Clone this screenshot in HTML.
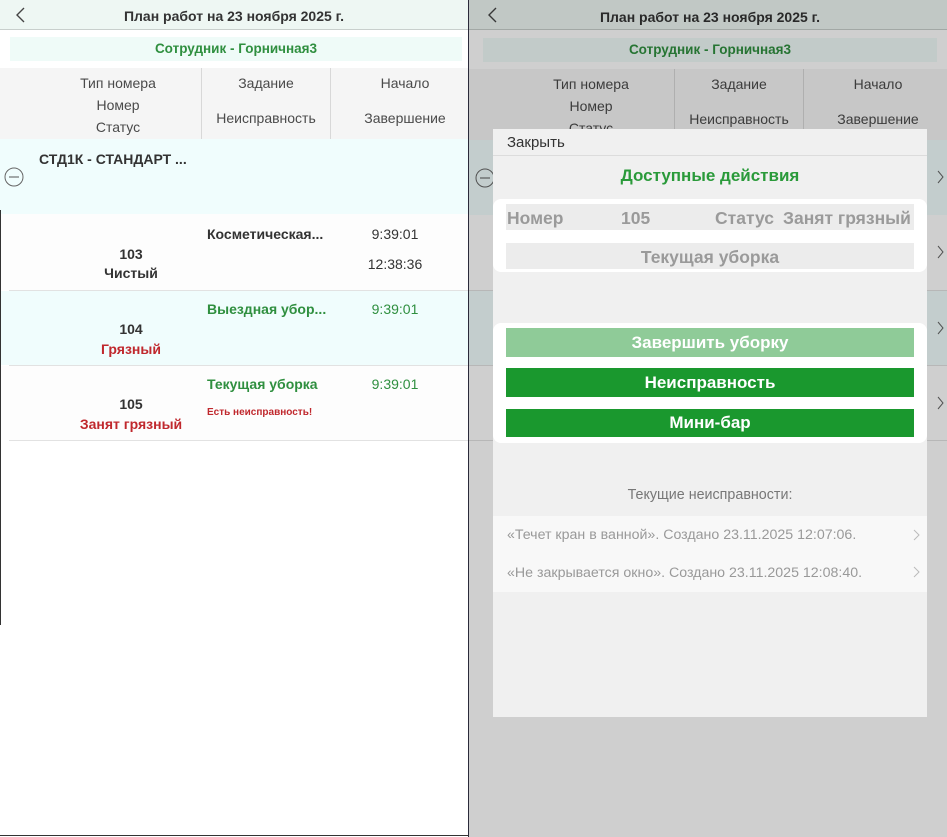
<!DOCTYPE html>
<html><head><meta charset="utf-8"><style>
*{margin:0;padding:0;box-sizing:border-box}
body{width:947px;height:837px;overflow:hidden;background:#fff;font-family:"Liberation Sans",sans-serif;position:relative}
.a{position:absolute}
.p{position:absolute;top:0;height:837px;overflow:hidden;background:#fff}
.hd{left:0;top:0;height:30px;background:#eef7f3;border-bottom:1px solid #c8cfcc}
.t{position:absolute;white-space:nowrap}
.c{text-align:center}
.b{font-weight:bold}
.g{color:#2f8f3f}
.r{color:#c0282d}
.k{color:#333}
.h{color:#4a4a4a;font-size:14px}
</style></head><body>

<!-- LEFT PANEL -->
<div class="p" style="left:0;width:468px">
  <div class="a hd" style="width:468px"></div>
  <svg class="a" style="left:14px;top:7px" width="14" height="16"><path d="M10 1 L3 8 L10 15" fill="none" stroke="#444" stroke-width="1.4"/></svg>
  <div class="t c b k" style="left:0;width:468px;top:8px;font-size:14px">План работ на 23 ноября 2025 г.</div>
  <div class="a" style="left:10px;top:37px;width:452px;height:24px;background:#effbf8"></div>
  <div class="t c b g" style="left:10px;width:452px;top:41px;font-size:13.5px">Сотрудник - Горничная3</div>
  <div class="a" style="left:0;top:68px;width:468px;height:71px;background:#f5f5f5"></div>
  <div class="a" style="left:201px;top:68px;width:1px;height:71px;background:#d8d8d8"></div>
  <div class="a" style="left:330px;top:68px;width:1px;height:71px;background:#d8d8d8"></div>
  <div class="t c h" style="left:18px;width:200px;top:75px">Тип номера</div>
  <div class="t c h" style="left:18px;width:200px;top:97px">Номер</div>
  <div class="t c h" style="left:18px;width:200px;top:119px">Статус</div>
  <div class="t c h" style="left:202px;width:128px;top:75px">Задание</div>
  <div class="t c h" style="left:202px;width:128px;top:110px">Неисправность</div>
  <div class="t c h" style="left:340px;width:130px;top:75px">Начало</div>
  <div class="t c h" style="left:340px;width:130px;top:110px">Завершение</div>
  <div class="a" style="left:0;top:139px;width:468px;height:75px;background:#f0fdfd"></div>
  <div class="t b k" style="left:39px;top:151px;font-size:14px">СТД1К - СТАНДАРТ ...</div>
  <svg class="a" style="left:4px;top:167px" width="22" height="22"><circle cx="10" cy="10" r="9" fill="none" stroke="#666" stroke-width="1"/><path d="M5 10 H15" stroke="#555"/></svg>
  <div class="a" style="left:0;top:214px;width:468px;height:76px;background:#fdfdfd"></div>
  <div class="a" style="left:9px;top:290px;width:459px;height:1px;background:#e2e2e2"></div>
  <div class="t b k" style="left:207px;top:226px;font-size:14px">Косметическая...</div>
  <div class="t c k" style="left:355px;width:80px;top:226px;font-size:14px">9:39:01</div>
  <div class="t c k" style="left:355px;width:80px;top:256px;font-size:14px">12:38:36</div>
  <div class="t c b k" style="left:80px;width:102px;top:246px;font-size:14px">103</div>
  <div class="t c b k" style="left:80px;width:102px;top:265px;font-size:14px">Чистый</div>
  <div class="a" style="left:0;top:291px;width:468px;height:74px;background:#f0fdfd"></div>
  <div class="a" style="left:9px;top:365px;width:459px;height:1px;background:#e2e2e2"></div>
  <div class="t b g" style="left:207px;top:301px;font-size:14px">Выездная убор...</div>
  <div class="t c g" style="left:355px;width:80px;top:301px;font-size:14px">9:39:01</div>
  <div class="t c b k" style="left:80px;width:102px;top:321px;font-size:14px">104</div>
  <div class="t c b r" style="left:80px;width:102px;top:341px;font-size:14px">Грязный</div>
  <div class="a" style="left:0;top:366px;width:468px;height:74px;background:#fdfdfd"></div>
  <div class="a" style="left:9px;top:440px;width:459px;height:1px;background:#e2e2e2"></div>
  <div class="t b g" style="left:207px;top:376px;font-size:14px">Текущая уборка</div>
  <div class="t c g" style="left:355px;width:80px;top:376px;font-size:14px">9:39:01</div>
  <div class="t b r" style="left:207px;top:407px;font-size:10px">Есть неисправность!</div>
  <div class="t c b k" style="left:80px;width:102px;top:396px;font-size:14px">105</div>
  <div class="t c b r" style="left:70px;width:122px;top:416px;font-size:14px">Занят грязный</div>
</div>
<div class="a" style="left:0;top:210px;width:1px;height:415px;background:#333"></div>
<div class="a" style="left:468px;top:0;width:1px;height:837px;background:#2a2a3a"></div>
<div class="a" style="left:0;top:835px;width:947px;height:1px;background:#333"></div>

<!-- RIGHT PANEL -->
<div class="p" style="left:469px;width:478px">
  <div class="a hd" style="width:478px"></div>
  <svg class="a" style="left:17px;top:7px" width="14" height="16"><path d="M10 1 L3 8 L10 15" fill="none" stroke="#444" stroke-width="1.4"/></svg>
  <div class="t c b k" style="left:4px;width:474px;top:9px;font-size:14px">План работ на 23 ноября 2025 г.</div>
  <div class="a" style="left:14px;top:38px;width:454px;height:24px;background:#effbf8"></div>
  <div class="t c b g" style="left:14px;width:454px;top:42px;font-size:13.5px">Сотрудник - Горничная3</div>
  <div class="a" style="left:0;top:69px;width:478px;height:71px;background:#f5f5f5"></div>
  <div class="a" style="left:205px;top:69px;width:1px;height:71px;background:#d8d8d8"></div>
  <div class="a" style="left:334px;top:69px;width:1px;height:71px;background:#d8d8d8"></div>
  <div class="t c h" style="left:20px;width:204px;top:76px">Тип номера</div>
  <div class="t c h" style="left:20px;width:204px;top:98px">Номер</div>
  <div class="t c h" style="left:20px;width:204px;top:120px">Статус</div>
  <div class="t c h" style="left:206px;width:128px;top:76px">Задание</div>
  <div class="t c h" style="left:206px;width:128px;top:111px">Неисправность</div>
  <div class="t c h" style="left:344px;width:130px;top:76px">Начало</div>
  <div class="t c h" style="left:344px;width:130px;top:111px">Завершение</div>
  <div class="a" style="left:0;top:140px;width:478px;height:75px;background:#f0fdfd"></div>
  <svg class="a" style="left:6px;top:168px" width="22" height="22"><circle cx="10" cy="10" r="9" fill="none" stroke="#666"/><path d="M5 10 H15" stroke="#555"/></svg>
  <div class="a" style="left:0;top:291px;width:478px;height:74px;background:#f0fdfd"></div>
  <div class="a" style="left:0;top:365px;width:478px;height:1px;background:#e2e2e2"></div>
  <div class="a" style="left:0;top:290px;width:478px;height:1px;background:#e2e2e2"></div>
  <div class="a" style="left:0;top:440px;width:478px;height:1px;background:#e2e2e2"></div>
  <svg class="a" style="left:468px;top:170px" width="10" height="250"><g fill="none" stroke="#666"><path d="M1 1 L6 7 L1 13"/><path d="M1 76 L6 82 L1 88"/><path d="M1 152 L6 158 L1 164"/><path d="M1 227 L6 233 L1 239"/></g></svg>
  <div class="a" style="left:0;top:0;width:478px;height:837px;background:rgba(0,0,0,0.19)"></div>

  <!-- modal -->
  <div class="a" style="left:24px;top:129px;width:434px;height:588px;background:#f0f0f0">
    <div class="t" style="left:14px;top:5px;font-size:15px;color:#333">Закрыть</div>
    <div class="a" style="left:0;top:26px;width:434px;height:1px;background:#dcdcdc"></div>
    <div class="t c b g" style="left:0;width:434px;top:37px;font-size:17px;color:#2a9a3a">Доступные действия</div>
    <div class="a" style="left:0;top:70px;width:434px;height:73px;background:#fff;border-radius:8px"></div>
    <div class="a" style="left:13px;top:75px;width:408px;height:26px;background:#ececec"></div>
    <div class="a" style="left:13px;top:114px;width:408px;height:26px;background:#ececec"></div>
    <div class="t b" style="left:14px;top:79px;font-size:17.5px;color:#9a9a9a">Номер</div>
    <div class="t b" style="left:128px;top:79px;font-size:17.5px;color:#9a9a9a">105</div>
    <div class="t b" style="left:222px;top:79px;font-size:17.5px;color:#9a9a9a">Статус</div>
    <div class="t b" style="left:290px;top:79px;font-size:17.5px;color:#9a9a9a">Занят грязный</div>
    <div class="t c b" style="left:13px;width:408px;top:118px;font-size:17.5px;color:#9a9a9a">Текущая уборка</div>
    <div class="a" style="left:0;top:194px;width:434px;height:120px;background:#fff;border-radius:8px"></div>
    <div class="a" style="left:13px;top:199px;width:408px;height:29px;background:#8fcb98"></div>
    <div class="t c b" style="left:13px;width:408px;top:204px;font-size:17px;color:#fff">Завершить уборку</div>
    <div class="a" style="left:13px;top:239px;width:408px;height:29px;background:#1a982e"></div>
    <div class="t c b" style="left:13px;width:408px;top:244px;font-size:17px;color:#fff">Неисправность</div>
    <div class="a" style="left:13px;top:280px;width:408px;height:28px;background:#1a982e"></div>
    <div class="t c b" style="left:13px;width:408px;top:284px;font-size:17px;color:#fff">Мини-бар</div>
    <div class="t c" style="left:0;width:434px;top:358px;font-size:14.3px;color:#777">Текущие неисправности:</div>
    <div class="a" style="left:0;top:387px;width:434px;height:76px;background:#f8f8f8"></div>
    <div class="t" style="left:14px;top:398px;font-size:14.2px;color:#999">«Течет кран в ванной». Создано 23.11.2025 12:07:06.</div>
    <div class="t" style="left:14px;top:436px;font-size:14.2px;color:#999">«Не закрывается окно». Создано 23.11.2025 12:08:40.</div>
    <svg class="a" style="left:420px;top:400px" width="8" height="50"><g fill="none" stroke="#bbb"><path d="M1 1 L6 6 L1 11"/><path d="M1 38 L6 43 L1 48"/></g></svg>
  </div>
</div>
</body></html>
